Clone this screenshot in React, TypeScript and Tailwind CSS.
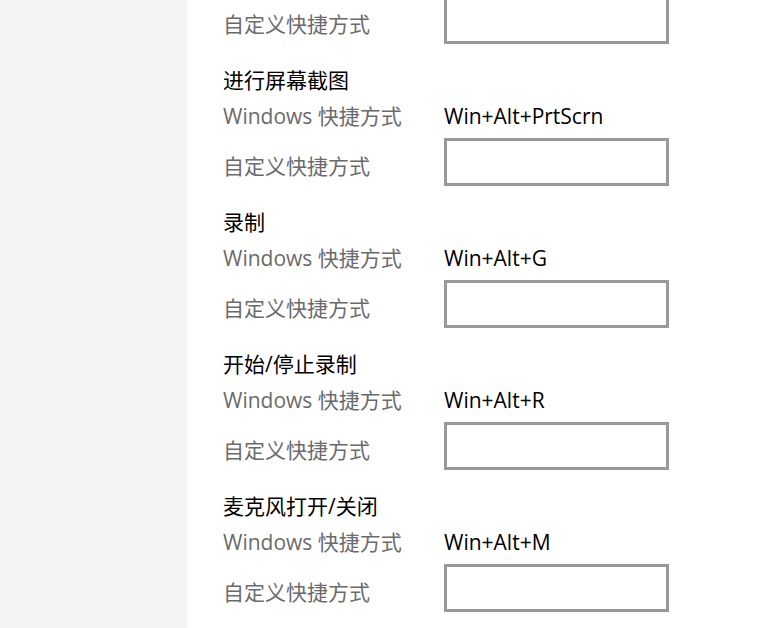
import React from "react";

const sections = [
  { title: "", value: "" },
  { title: "进行屏幕截图", value: "Win+Alt+PrtScrn" },
  { title: "录制", value: "Win+Alt+G" },
  { title: "开始/停止录制", value: "Win+Alt+R" },
  { title: "麦克风打开/关闭", value: "Win+Alt+M" },
];

const font = {
  fontFamily: '"Open Sans", "Noto Sans CJK SC", sans-serif',
};

export default function App() {
  return (
    <div className="flex h-[628px] w-[784px] overflow-hidden bg-white" style={font}>
      <div className="w-[187px] shrink-0 bg-[#f3f3f3]" />
      <div className="flex-1 pl-[36px]">
        <div className="mt-[-78px] flex flex-col">
          {sections.map((s, i) => (
            <div key={i} className="flex flex-col pb-[20px]">
              <div className="flex h-[32px] items-center pt-[1px] text-[21px] text-black">{s.title}</div>
              <div className="mt-[5px] flex h-[32px] items-center text-[21px]">
                <div className="w-[221px] text-[#6b6b6b]">Windows 快捷方式</div>
                <div className="text-black">{s.value}</div>
              </div>
              <div className="mt-[5px] flex h-[48px] items-center text-[21px]">
                <div className="w-[221px] pt-[9px] text-[#6b6b6b]">自定义快捷方式</div>
                <div className="h-[48px] w-[225px] border-[3px] border-[#999999] bg-white" />
              </div>
            </div>
          ))}
        </div>
      </div>
    </div>
  );
}
